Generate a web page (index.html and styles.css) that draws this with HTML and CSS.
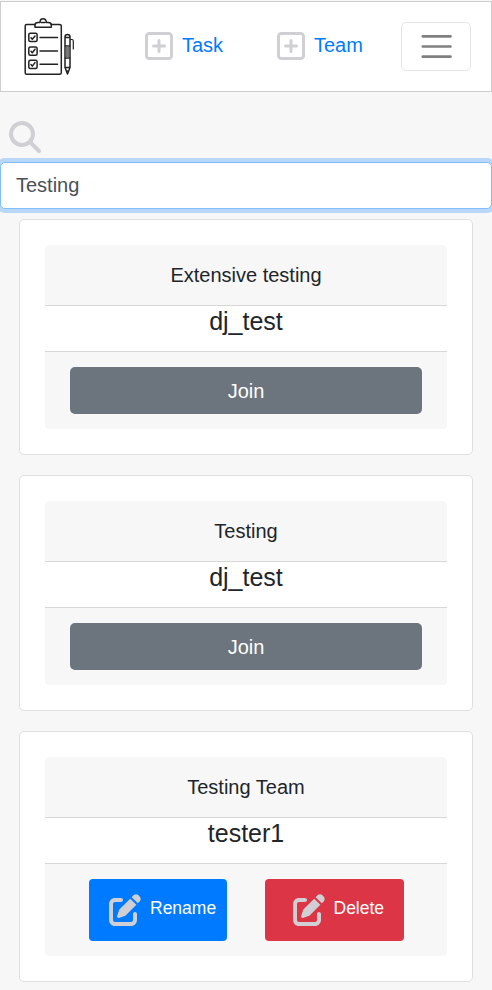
FILE: index.html
```html
<!DOCTYPE html>
<html lang="en">
<head>
<meta charset="utf-8">
<title>Teams</title>
<link rel="stylesheet" href="styles.css">
</head>
<body>
<svg class="sprite" aria-hidden="true">
  <symbol id="plus" viewBox="0 0 28 28">
    <rect x="1.5" y="1.5" width="25" height="25" rx="2.8" fill="none" stroke="currentColor" stroke-width="3"/>
    <path d="M14 8.500v11M8.500 14h11" fill="none" stroke="currentColor" stroke-width="3" stroke-linecap="round"/>
  </symbol>
  <symbol id="search" viewBox="0 0 512 512">
    <path fill="currentColor" d="M416 208c0 45.900-14.900 88.300-40 122.700L502.600 457.400c12.500 12.500 12.500 32.800 0 45.300s-32.800 12.500-45.300 0L330.700 376c-34.400 25.200-76.800 40-122.700 40C93.100 416 0 322.900 0 208S93.100 0 208 0S416 93.100 416 208zM208 352a144 144 0 1 0 0-288 144 144 0 1 0 0 288z"/>
  </symbol>
  <symbol id="edit" viewBox="0 0 512 512">
    <path fill="currentColor" d="M471.600 21.700c-21.900-21.900-57.300-21.900-79.200 0L362.300 51.700l97.900 97.900 30.100-30.100c21.900-21.900 21.900-57.300 0-79.200L471.600 21.700zm-299.200 220c-6.100 6.100-10.800 13.600-13.500 21.900l-29.600 88.800c-2.900 8.600-.6 18.100 5.800 24.600s15.900 8.700 24.600 5.800l88.800-29.600c8.200-2.700 15.700-7.400 21.900-13.500L437.700 172.300 339.700 74.300 172.400 241.700zM96 64C43 64 0 107 0 160V416c0 53 43 96 96 96H352c53 0 96-43 96-96V320c0-17.700-14.300-32-32-32s-32 14.300-32 32v96c0 17.700-14.300 32-32 32H96c-17.700 0-32-14.300-32-32V160c0-17.700 14.300-32 32-32h96c17.700 0 32-14.300 32-32s-14.300-32-32-32H96z"/>
  </symbol>
</svg>
<nav class="navbar">
  <a class="brand" href="#" aria-label="Home">
    <svg width="52" height="58" viewBox="0 0 52 58" fill="none" stroke="#222" stroke-width="1.500" stroke-linejoin="round" stroke-linecap="round">
      <path d="M11 6.500H2.500Q1.200 6.500 1.200 8V54.800Q1.200 56.300 2.500 56.300H35.500Q37.300 56.300 37.300 54.800V8Q37.300 6.500 35.500 6.500H27.300"/>
      <path d="M11 9.300V7Q11 4.500 14 4.500H16Q16 .8 19 .8T22.500 4.500H24.300Q27.300 4.500 27.300 7V9.300ZM17.500 4.500H21"/>
      <g stroke-width="1.500">
        <rect x="4.800" y="15.300" width="8.300" height="8.300" rx="1.500"/><path d="M7 19.700l1.300 1.500L11 18M16 19.500H33.500"/>
        <rect x="4.800" y="28.900" width="8.300" height="8.300" rx="1.500"/><path d="M7 33.200l1.300 1.500 2.700-3.500M16 33H33.500"/>
        <rect x="4.800" y="42.300" width="8.300" height="8.300" rx="1.500"/><path d="M7 46.600l1.300 1.500 2.700-3.500M16 46.300H33.500"/>
      </g>
      <path d="M41 49.500V19Q41 16.500 43.500 16.500T46 19V49.500L43.500 56ZM41 19.500H46M41 28H46M41 40H46M41 49.500H46M43.500 53V56"/>
      <path d="M43.500 28.500V39.500" stroke="#777" stroke-width="3" stroke-linecap="butt"/>
      <path d="M46.500 21.500H48Q49.300 21.500 49.300 23V31" stroke-width="1.200"/>
    </svg>
  </a>
  <a class="nav-link task" href="#"><svg class="plus-icon"><use href="#plus"/></svg>Task</a>
  <a class="nav-link team" href="#"><svg class="plus-icon"><use href="#plus"/></svg>Team</a>
  <button class="toggler" aria-label="Menu">
    <svg width="38" height="38" viewBox="0 0 30 30"><path d="M4.500 6.600h22M4.500 14.600h22M4.500 22.600h22" stroke="#808080" stroke-width="2" stroke-linecap="round"/></svg>
  </button>
</nav>
<main>
  <div class="search-row"><svg class="icon"><use href="#search"/></svg></div>
  <div class="search-field">Testing</div>
  <div class="cards">
    <section class="card">
      <div class="card-header">Extensive testing</div>
      <h5 class="owner">dj_test</h5>
      <div class="card-footer"><button class="btn join">Join</button></div>
    </section>
    <section class="card">
      <div class="card-header">Testing</div>
      <h5 class="owner">dj_test</h5>
      <div class="card-footer"><button class="btn join">Join</button></div>
    </section>
    <section class="card">
      <div class="card-header">Testing Team</div>
      <h5 class="owner">tester1</h5>
      <div class="card-footer actions">
        <button class="btn rename"><svg class="icon"><use href="#edit"/></svg><span>Rename</span></button>
        <button class="btn delete"><svg class="icon"><use href="#edit"/></svg><span>Delete</span></button>
      </div>
    </section>
  </div>
</main>
</body>
</html>
```
FILE: styles.css
```css
* { box-sizing: border-box; }
body {
  margin: 0;
  padding-top: 1px;
  background: #f7f7f7;
  color: #212529;
  font: 20px/30px "Liberation Sans", Arial, sans-serif;
  overflow: hidden;
}
.sprite { display: none; }
.icon { display: block; width: 32px; height: 32px; color: #cfcfd4; flex: none; }
.navbar {
  display: flex;
  height: 91px;
  padding-left: 23px;
  background: #fff;
  border: 1px solid #cecece;
}
.brand { width: 121px; padding-top: 16px; }
.brand svg { display: block; }
.nav-link {
  display: flex;
  align-items: flex-start;
  width: 132px;
  padding-top: 28px;
  color: #007bff;
  text-decoration: none;
}
.nav-link.team { width: 124px; }
.plus-icon { width: 28px; height: 28px; margin: 2px 9px 0 0; color: #cfcfd4; }
.toggler {
  display: flex;
  align-items: center;
  justify-content: center;
  width: 70px;
  height: 49px;
  margin-top: 20px;
  padding: 0;
  background: transparent;
  border: 1px solid #e5e5e5;
  border-radius: 5px;
}
.search-row { height: 70px; padding: 29px 0 0 9px; }
.search-field {
  height: 47px;
  padding: 7px 15px;
  color: #495057;
  background: #fff;
  border: 1px solid #80bdff;
  border-radius: 5px;
  box-shadow: 0 0 0 4px rgba(0, 123, 255, .25);
}
.cards { display: flex; flex-direction: column; gap: 20px; padding: 10px 19px 0; }
.card {
  padding: 25px;
  background: #fff;
  border: 1px solid #dfdfdf;
  border-radius: 5px;
  text-align: center;
}
.card-header {
  padding: 15px 25px;
  background: #f7f7f7;
  border-bottom: 1px solid #d7d7d7;
  border-radius: 4px 4px 0 0;
}
.owner { margin: 0 0 15px; font-size: 25px; line-height: 30px; font-weight: 400; }
.card-footer {
  padding: 15px 25px;
  background: #f7f7f7;
  border-top: 1px solid #d7d7d7;
  border-radius: 0 0 4px 4px;
}
.btn {
  display: block;
  border: 0;
  border-radius: 5px;
  padding: 0;
  color: #fff;
  font: inherit;
}
.join { width: 100%; height: 47px; background: #6c757d; }
.actions { display: flex; gap: 38px; padding: 15px 43px 15px 44px; }
.rename, .delete {
  display: flex;
  align-items: flex-start;
  gap: 9px;
  height: 62px;
  padding-top: 15px;
  font-size: 17.5px;
  line-height: 26px;
  border-radius: 4px;
}
.btn span { padding-top: 1px; }
.rename { width: 138px; padding-left: 20px; background: #007bff; }
.delete { width: 139px; padding-left: 27.5px; background: #dc3545; }
```
